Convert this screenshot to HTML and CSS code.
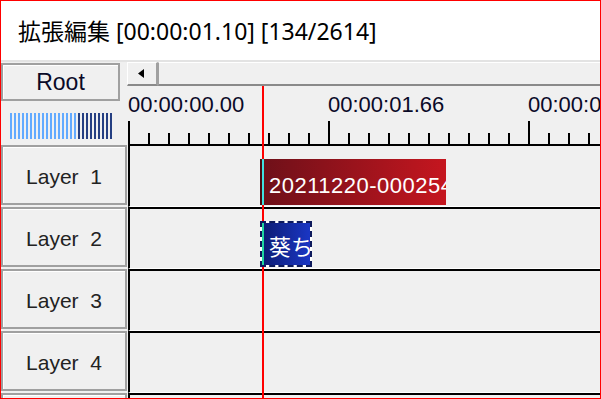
FILE: index.html
```html
<!DOCTYPE html>
<html>
<head>
    <title>拡張編集</title>
    <meta charset="utf-8">
    <link rel="stylesheet" href="styles.css">
</head>
<body>
    <div class="window">
        <div class="titlebar">拡張編集 [00:00:01.10] [134/2614]</div>
        <div class="editor">
            <div class="layers">
                <div class="root-btn">Root</div>
                <div class="meter">
                    <span class="meter-lo"></span>
                    <span class="meter-hi"></span>
                </div>
                <div class="layer-btn">Layer  1</div>
                <div class="layer-btn">Layer  2</div>
                <div class="layer-btn">Layer  3</div>
                <div class="layer-btn">Layer  4</div>
                <div class="layer-btn">Layer  5</div>
            </div>

            <div class="timeline">
                <div class="scrollbar">
                    <div class="scroll-btn">
                        <svg width="6" height="9" viewBox="0 0 6 9"><path d="M6 0 L0 4.5 L6 9 Z" fill="#000"/></svg>
                    </div>
                    <div class="scroll-thumb"></div>
                </div>
                <div class="ruler">
                    <span class="ruler-label">00:00:00.00</span>
                    <span class="ruler-label">00:00:01.66</span>
                    <span class="ruler-label">00:00:03.33</span>
                </div>
                <div class="track first">
                    <div class="clip clip-video">20211220-000254</div>
                </div>
                <div class="track">
                    <div class="clip clip-text selected">葵ちゃん</div>
                </div>
                <div class="track"></div>
                <div class="track"></div>
                <div class="track"></div>
                <div class="playhead"></div>
            </div>
        </div>
    </div>
</body>
</html>
```

FILE: styles.css
```css
body {
    margin: 0;
    background-color: #fff;
    font-family: "Liberation Sans", Arial, sans-serif;
}
.window {
    width: 601px;
    height: 399px;
    box-sizing: border-box;
    border: 1px solid #ff0000;
    background-color: #f0f0f0;
    display: flex;
    flex-direction: column;
    overflow: hidden;
}
.titlebar {
    flex: none;
    height: 59px;
    background-color: #fff;
    border-bottom: 2px solid #e3e3e3;
    padding-left: 17px;
    font-family: "Noto Sans", "Noto Sans CJK JP", sans-serif;
    font-size: 23px;
    line-height: 61px;
    color: #000;
    white-space: nowrap;
}
.editor {
    flex: 1;
    display: flex;
    min-height: 0;
}
.layers {
    flex: none;
    width: 126px;
    display: flex;
    flex-direction: column;
}
.root-btn,
.layer-btn {
    box-sizing: border-box;
    border: 2px solid #a0a0a0;
    box-shadow: inset 1px 1px 0 #fff;
    background-color: #f0f0f0;
    color: #222;
    display: flex;
    align-items: center;
    justify-content: center;
    white-space: pre;
}
.root-btn {
    flex: none;
    margin-top: 1px;
    width: 119px;
    height: 38px;
    font-size: 23px;
    color: #0a0a28;
}
.layer-btn {
    flex: none;
    width: 126px;
    height: 60px;
    margin-bottom: 2px;
    font-size: 21px;
    padding-top: 3px;
}
.meter {
    flex: none;
    display: flex;
    margin: 12px 0 6px 9px;
    height: 26px;
}
.meter-lo {
    width: 68px;
    background: repeating-linear-gradient(to right, #62aaff 0 2px, transparent 2px 4px);
}
.meter-hi {
    width: 35px;
    background: repeating-linear-gradient(to right, #253f82 0 2px, transparent 2px 4px);
}
.timeline {
    flex: 1;
    position: relative;
    display: flex;
    flex-direction: column;
    overflow: hidden;
}
.scrollbar {
    flex: none;
    height: 24px;
    display: flex;
}
.scroll-btn,
.scroll-thumb {
    box-sizing: border-box;
    border-top: 1px solid #fff;
    border-left: 1px solid #fff;
    border-right: 2px solid #a0a0a0;
    border-bottom: 2px solid #8a8a8a;
    background-color: #f0f0f0;
}
.scroll-btn {
    flex: none;
    width: 31px;
    display: flex;
    align-items: center;
    padding-left: 10px;
}
.scroll-thumb {
    flex: 1;
    border-right: none;
    border-left: 1px solid #a0a0a0;
}
.ruler {
    flex: none;
    display: flex;
    height: 58px;
    margin-left: 1px;
    border-bottom: 2px solid #000;
    background-image:
        repeating-linear-gradient(to right, #000 0 2px, transparent 2px 200px),
        repeating-linear-gradient(to right, #000 0 2px, transparent 2px 20px);
    background-size: 100% 23px, 100% 11px;
    background-position: left bottom, left bottom;
    background-repeat: no-repeat;
}
.ruler-label {
    flex: none;
    width: 200px;
    padding-top: 8px;
    font-size: 22px;
    line-height: 22px;
    color: #0a0a28;
}
.track {
    flex: none;
    position: relative;
    height: 59px;
    margin-left: 1px;
    border-left: 2px solid #000;
    border-top: 2px solid #000;
    border-bottom: 1px solid #fff;
}
.track.first {
    height: 60px;
    border-top: none;
}
.clip {
    position: absolute;
    left: 130px;
    bottom: 1px;
    height: 46px;
    box-sizing: border-box;
    overflow: hidden;
    white-space: nowrap;
    color: #fff;
    font-size: 22px;
    line-height: 53px;
    z-index: 2;
}
.clip-video {
    width: 186px;
    padding-left: 9px;
    letter-spacing: 0.5px;
    background:
        linear-gradient(to right, #4a0a10 0 2px, #40e0e0 2px 4px, transparent 4px),
        linear-gradient(to right, #6d1019, #c5161f);
}
.clip-text {
    width: 52px;
    padding-left: 7px;
    font-family: "Noto Sans CJK JP", sans-serif;
    line-height: 44px;
    border: 2px dashed #0e1a5c;
    background:
        linear-gradient(to right, #20d8a0 0 2px, transparent 2px) padding-box,
        linear-gradient(to right, #0d1c72, #1a36c4) padding-box,
        #fff border-box;
}
.playhead {
    position: absolute;
    left: 135px;
    top: 24px;
    bottom: 0;
    width: 2px;
    background-color: #ff0000;
    z-index: 1;
}
```
